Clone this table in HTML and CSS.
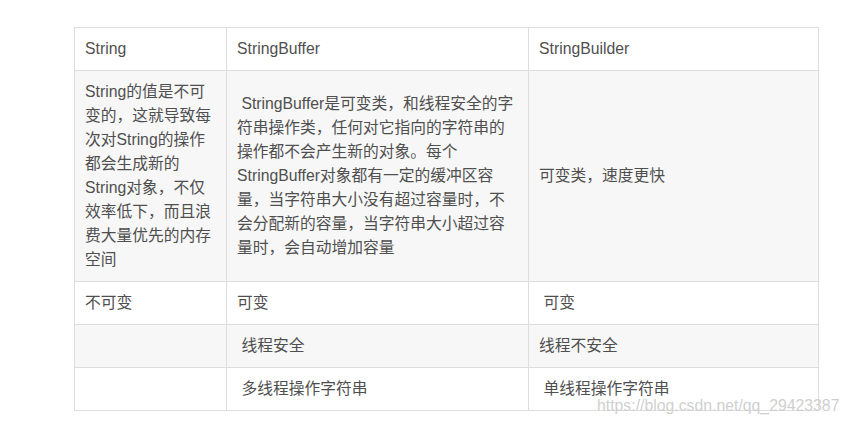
FILE: index.html
```html
<!DOCTYPE html>
<html lang="zh-CN">
<head>
<meta charset="utf-8">
<title>String / StringBuffer / StringBuilder</title>
<link rel="stylesheet" href="styles.css">
</head>
<body>
<div class="page">
  <table class="cmp">
    <colgroup>
      <col class="c1">
      <col class="c2">
      <col class="c3">
    </colgroup>
    <tbody>
      <tr class="odd">
        <td>String</td>
        <td>StringBuffer</td>
        <td>StringBuilder</td>
      </tr>
      <tr class="even">
        <td>String的值是不可变的，这就导致每次对String的操作都会生成新的String对象，不仅效率低下，而且浪费大量优先的内存空间</td>
        <td>&nbsp;StringBuffer是可变类，和线程安全的字符串操作类，任何对它指向的字符串的操作都不会产生新的对象。每个StringBuffer对象都有一定的缓冲区容量，当字符串大小没有超过容量时，不会分配新的容量，当字符串大小超过容量时，会自动增加容量</td>
        <td>可变类，速度更快</td>
      </tr>
      <tr class="odd">
        <td>不可变</td>
        <td>可变</td>
        <td>&nbsp;可变</td>
      </tr>
      <tr class="even">
        <td></td>
        <td>&nbsp;线程安全</td>
        <td>线程不安全</td>
      </tr>
      <tr class="odd">
        <td></td>
        <td>&nbsp;多线程操作字符串</td>
        <td>&nbsp;单线程操作字符串</td>
      </tr>
    </tbody>
  </table>
  <div class="watermark">https://blog.csdn.net/qq_29423387</div>
</div>
</body>
</html>
```
FILE: styles.css
```css
html, body {
  margin: 0;
  padding: 0;
  background: #ffffff;
}

.page {
  position: relative;
  width: 850px;
  height: 424px;
  padding: 27px 0 0 74px;
  box-sizing: border-box;
}

.cmp {
  border-collapse: separate;
  border-spacing: 0;
  table-layout: fixed;
  width: 745px;
  border-left: 1px solid #dddddd;
  border-top: 1px solid #dddddd;
  font-family: "Liberation Sans", "Noto Sans CJK SC", sans-serif;
  font-size: 15.75px;
  line-height: 24px;
  color: #4f4f4f;
}

.c1 { width: 152px; }
.c2 { width: 302px; }
.c3 { width: 290px; }

.cmp td {
  box-sizing: border-box;
  padding: 9px 10px;
  border-right: 1px solid #dddddd;
  border-bottom: 1px solid #dddddd;
  vertical-align: middle;
  height: 43px;
}

.cmp tr.odd td { background: #ffffff; }
.cmp tr.even td { background: #f7f7f7; }

.watermark {
  position: absolute;
  left: 597px;
  top: 396px;
  font-family: "Liberation Sans", sans-serif;
  font-size: 15.8px;
  line-height: 20px;
  color: rgba(190, 190, 190, 0.75);
  text-shadow: 0 0 1px rgba(255, 255, 255, 0.9);
  white-space: nowrap;
}
```
